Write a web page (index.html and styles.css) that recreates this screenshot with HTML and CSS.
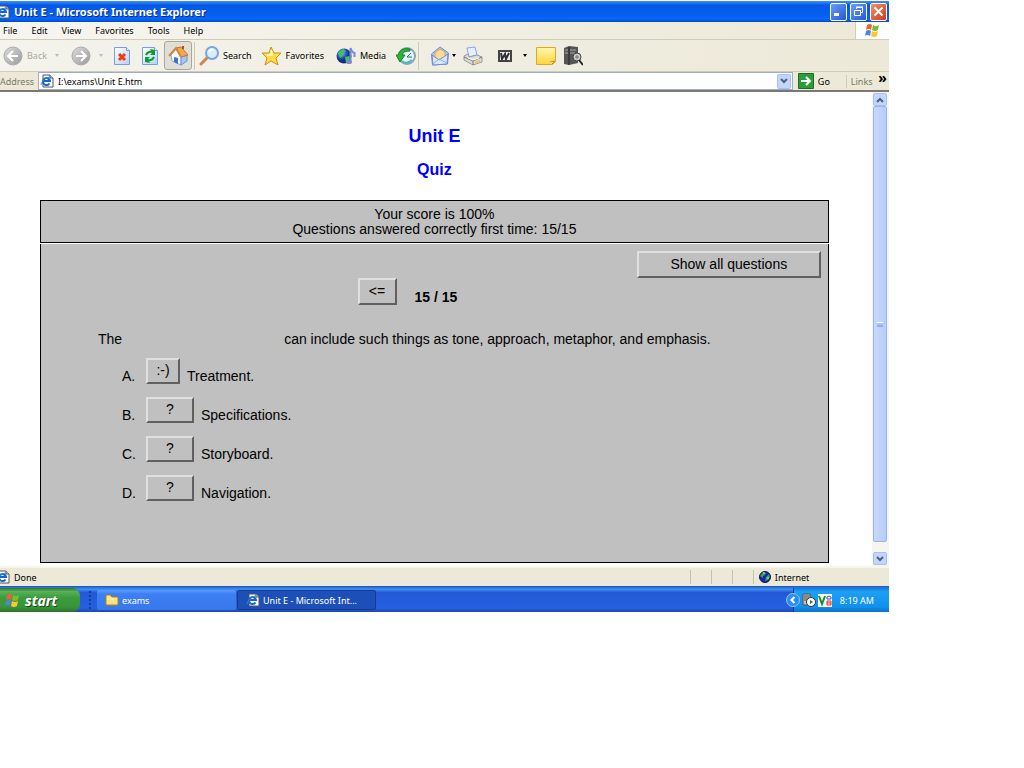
FILE: index.html
```html
<!DOCTYPE html>
<html lang="en">
<head>
    <meta charset="UTF-8">
    <meta name="viewport" content="width=device-width, initial-scale=1.0">
    <title>Unit E - Quiz</title>
    <link rel="stylesheet" href="styles.css">
</head>
<body>
    <!-- Shared icons -->
    <svg class="defs" width="0" height="0" aria-hidden="true">
        <defs>
            <linearGradient id="gray" x1="0" y1="0" x2="1" y2="1"><stop offset="0" stop-color="#ddd"/><stop offset="1" stop-color="#999"/></linearGradient>
            <linearGradient id="paper" x1="0" y1="0" x2="1" y2="1"><stop offset="0" stop-color="#fff"/><stop offset="1" stop-color="#b4d0f8"/></linearGradient>
            <linearGradient id="note" x1="0" y1="0" x2="0" y2="1"><stop offset="0" stop-color="#fff7b0"/><stop offset="1" stop-color="#ffd43c"/></linearGradient>
            <radialGradient id="ball" cx=".35" cy=".3"><stop offset="0" stop-color="#8cc8ff"/><stop offset=".6" stop-color="#1c5cc8"/><stop offset="1" stop-color="#10307c"/></radialGradient>
            <symbol id="ie" viewBox="0 0 14 14">
                <path d="M3 1h7l3 3v9H3z" fill="#fff" stroke="#555"/>
                <path d="M10 1v3h3" fill="#ddd" stroke="#555"/>
                <path d="M9.500 9.500a3.500 3.500 0 1 1 .5-2.500H4" fill="none" stroke="#1464d2" stroke-width="2"/>
                <path d="M1 11c0-3 5-8 9-8" fill="none" stroke="#2f86e8"/>
            </symbol>
            <symbol id="flag" viewBox="0 0 16 15">
                <path d="M3 2q3-2 5 0l-1 5q-2-2-5 0z" fill="#f0602c"/>
                <path d="M9 2q3 2 6 0l-1 5q-3 2-6 0z" fill="#7cba3c"/>
                <path d="M2 8q3-2 5 0l-1 5q-3-2-5 0z" fill="#4a86e0"/>
                <path d="M8 8q3 2 6 0l-1 5q-3 2-6 0z" fill="#fcc82c"/>
            </symbol>
            <symbol id="globe" viewBox="0 0 12 12">
                <circle cx="6" cy="6" r="5.500" fill="#1424b4" stroke="#101050"/>
                <path d="M1 5l3-4 3 1-1 2-2 1v2zM7 6l3-3 1 3-2 3-3 1z" fill="#34a83c"/>
                <path d="M4 2h2M8 7h2" stroke="#b8f0c0"/>
            </symbol>
        </defs>
    </svg>

    <div class="screen">
        <header class="titlebar">
            <svg class="title-icon" viewBox="4 0 10 14"><use href="#ie" width="14" height="14"/></svg>
            <span class="title-text">Unit E - Microsoft Internet Explorer</span>
            <div class="window-buttons">
                <button class="win-btn" aria-label="Minimize"><svg viewBox="0 0 15 15"><path d="M3 10.500h5" stroke="#fff" stroke-width="3"/></svg></button>
                <button class="win-btn" aria-label="Restore"><svg viewBox="0 0 15 15"><path d="M5.500 5V3.500h6v5H10M5 3h7M3.500 6.500h6v5h-6zM3 6.500h7" fill="none" stroke="#fff"/></svg></button>
                <button class="win-btn close" aria-label="Close"><svg viewBox="0 0 15 15"><path d="M3.500 3.500l8 8M11.500 3.500l-8 8" stroke="#fff" stroke-width="2"/></svg></button>
            </div>
        </header>

        <nav class="menubar">
            <ul class="menu">
                <li>File</li>
                <li>Edit</li>
                <li>View</li>
                <li>Favorites</li>
                <li>Tools</li>
                <li>Help</li>
            </ul>
            <div class="brand"><svg width="16" height="15"><use href="#flag"/></svg></div>
        </nav>

        <div class="toolbar">
            <button class="tool back" disabled>
                <svg class="icon" viewBox="0 0 20 20"><circle cx="10" cy="10" r="9" fill="url(#gray)" stroke="#aaa"/><path d="M15 10H6M10 5l-5 5 5 5" fill="none" stroke="#fff" stroke-width="2"/></svg>
                Back
            </button>
            <span class="arrow off"></span>
            <button class="tool forward" aria-label="Forward" disabled>
                <svg class="icon" viewBox="0 0 20 20"><circle cx="10" cy="10" r="9" fill="url(#gray)" stroke="#aaa"/><path d="M5 10h9M10 5l5 5-5 5" fill="none" stroke="#fff" stroke-width="2"/></svg>
            </button>
            <span class="arrow off"></span>
            <button class="tool stop" aria-label="Stop">
                <svg class="icon" viewBox="0 0 20 20"><path d="M2.500 1.500h12l3 3v14h-15z" fill="url(#paper)" stroke="#7c9cdc"/><path d="M14.500 1.500v3h3" fill="#fff" stroke="#7c9cdc"/><path d="M7 8l6 6M13 8l-6 6" stroke="#f03c14" stroke-width="3"/></svg>
            </button>
            <button class="tool refresh" aria-label="Refresh">
                <svg class="icon" viewBox="0 0 20 20"><path d="M2.500 1.500h12l3 3v14h-15z" fill="url(#paper)" stroke="#7c9cdc"/><path d="M14.500 1.500v3h3" fill="#fff" stroke="#7c9cdc"/><path d="M6 9q2-4 6-3M14 11q-2 4-6 3" fill="none" stroke="#109c28" stroke-width="2"/><path d="M10 3l5 1v5h-5l2-2zM10 17l-5-1v-5h5l-2 2z" fill="#109c28"/></svg>
            </button>
            <button class="tool home" aria-label="Home">
                <svg class="icon" viewBox="0 0 20 20"><path d="M3 9l5-6 5 8v8l-9-4z" fill="#fff" stroke="#8ca4d8"/><path d="M13 11l6-2v6l-6 4z" fill="#a8c8f4" stroke="#6c8cd0"/><path d="M8 2l5-1 7 8-7 2z" fill="#f4a84c" stroke="#c07830"/><path d="M1 10l7-8 5 9" fill="none" stroke="#d08840" stroke-width="2"/><path d="M6 11l4 1v6l-4-2z" fill="#3c74c8"/><path d="M14 0h2v3h-2z" fill="#b44c2c"/></svg>
            </button>
            <span class="divider"></span>
            <button class="tool search">
                <svg class="icon" viewBox="0 0 20 20"><path d="M2 18l7-7" stroke="#d4824c" stroke-width="3" stroke-linecap="round"/><circle cx="13" cy="7" r="6" fill="#dceefe" stroke="#7ca4dc" stroke-width="2"/><path d="M10 6q1-3 4-2" fill="none" stroke="#fff" stroke-width="2"/></svg>
                Search
            </button>
            <button class="tool favorites">
                <svg class="icon" viewBox="0 0 20 20"><path d="M9 1l3 6 7 0-5 5 2 7-7-4-6 4 2-7-5-5 7 0z" fill="#ffdc48" stroke="#c89010" stroke-linejoin="round"/><path d="M9 4l1 5-5 0" fill="none" stroke="#fff8b8" stroke-width="2"/></svg>
                Favorites
            </button>
            <button class="tool media">
                <svg class="icon" viewBox="0 0 20 20"><circle cx="8" cy="10" r="7.500" fill="url(#ball)"/><path d="M2 7l5-4 3 2-3 2-1 4-2 1zM9 11l4-1 1 3-4 4z" fill="#4cc048"/><path d="M14.500 16V2q1 4 4 5v4" fill="none" stroke="#7c88d8" stroke-width="2"/><ellipse cx="13" cy="16" rx="3" ry="2" fill="#7c88d8"/></svg>
                Media
            </button>
            <button class="tool history" aria-label="History">
                <svg class="icon" viewBox="0 0 20 20"><circle cx="11" cy="10" r="8" fill="#e8f4fc" stroke="#8ca4b8" stroke-width="2"/><path d="M14 3Q4 1 2 9H0l4 7 5-7H6q1-4 8-4z" fill="#2cb43c" stroke="#148424"/><path d="M11 11l4-4M11 11h5" fill="none" stroke="#246c7c"/><path d="M6 15q5 4 10-1" fill="none" stroke="#4cb8c0" stroke-width="2"/></svg>
            </button>
            <span class="divider"></span>
            <button class="tool mail" aria-label="Mail">
                <svg class="icon" viewBox="0 0 20 20"><path d="M1.500 8L10 1l8.500 6-1 11-15 1z" fill="#a8c8f8" stroke="#6c8cd4"/><path d="M5 7l5-4 5 3v5l-6 3-4-3z" fill="#ffdc90" stroke="#e0a848"/><path d="M2 9l7 5 9-6-1 10-14 1z" fill="#d8e8fe" stroke="#6c8cd4"/><path d="M3 18l6-5 8 4" fill="none" stroke="#8cacec"/></svg>
            </button>
            <span class="arrow"></span>
            <button class="tool print" aria-label="Print">
                <svg class="icon" viewBox="0 0 20 20"><path d="M4 2l8-1 2 8-8 2z" fill="#e4f0ff" stroke="#88a8e0"/><path d="M1 10l4-2 1 3 8-2 5 2v5l-9 3-9-5z" fill="#ddd" stroke="#999"/><path d="M1 11l9 4 9-4M10 15v4" fill="none" stroke="#777"/><path d="M5 12l5 2 6-2" stroke="#fff" fill="none"/><path d="M12 17l5-2" stroke="#e8c860" stroke-width="2"/></svg>
            </button>
            <button class="tool word" aria-label="Edit with Word">
                <svg class="icon" viewBox="0 0 20 20"><path d="M3 4h14v12H3z" fill="#444"/><path d="M5 6h10v8H5z" fill="#eee"/><path d="M6 7l1 6 3-5 1 5 3-6" fill="none" stroke="#333" stroke-width="2"/></svg>
            </button>
            <span class="arrow"></span>
            <button class="tool discuss" aria-label="Discuss">
                <svg class="icon" viewBox="0 0 20 20"><path d="M.5 1.500h19v14l-3 3H.5z" fill="url(#note)" stroke="#e0a820"/><path d="M14 16l5-1-3 3" fill="#fff0a0" stroke="#d09010"/></svg>
            </button>
            <button class="tool research" aria-label="Research">
                <svg class="icon" viewBox="0 0 20 20"><path d="M1 2l5-2 9 1v16l-9 2-5-1z" fill="#555"/><path d="M2 4h3M7 4h6M2 7h3M7 7h5" stroke="#aaa"/><path d="M6 1v18" stroke="#222"/><circle cx="14" cy="11" r="4" fill="#ccc" stroke="#444"/><path d="M16 14l4 5" stroke="#222" stroke-width="2"/><path d="M12 11h4M14 9v4" stroke="#777"/></svg>
            </button>
        </div>

        <div class="addressbar">
            <label for="address">Address</label>
            <div class="address-field">
                <svg width="14" height="14"><use href="#ie"/></svg>
                <input type="text" id="address" value="I:\exams\Unit E.htm">
                <button class="scroll-btn drop" aria-label="Show addresses"><svg viewBox="0 0 12 12"><path d="M3 4l3 3 3-3" fill="none" stroke="#4d6185" stroke-width="2"/></svg></button>
            </div>
            <button class="go"><svg viewBox="0 0 16 16"><path d="M.5.5h15v15H.5z" fill="#2c9c38" stroke="#1c6c28"/><path d="M3 8h9M8 4l4 4-4 4" fill="none" stroke="#fff" stroke-width="2"/></svg>Go</button>
            <div class="links">Links <b>»</b></div>
        </div>

        <div class="viewport">
            <main class="page">
                <h1>Unit E</h1>
                <h2>Quiz</h2>
                <div class="score">
                    Your score is 100%<br>
                    Questions answered correctly first time: 15/15
                </div>
                <div class="quiz">
                    <div class="show-all"><button class="btn">Show all questions</button></div>
                    <div class="question-nav">
                        <button class="btn">&lt;=</button>
                        <strong>15 / 15</strong>
                    </div>
                    <p class="question"><span>The</span><span class="blank"></span><span>can include such things as tone, approach, metaphor, and emphasis.</span></p>
                    <ul class="answers">
                        <li><span class="letter">A.</span><button class="btn chosen">:-)</button><span>Treatment.</span></li>
                        <li><span class="letter">B.</span><button class="btn">?</button><span>Specifications.</span></li>
                        <li><span class="letter">C.</span><button class="btn">?</button><span>Storyboard.</span></li>
                        <li><span class="letter">D.</span><button class="btn">?</button><span>Navigation.</span></li>
                    </ul>
                </div>
            </main>
            <div class="scrollbar">
                <button class="scroll-btn" aria-label="Scroll up"><svg viewBox="0 0 12 12"><path d="M3 8l3-3 3 3" fill="none" stroke="#4d6185" stroke-width="2"/></svg></button>
                <div class="thumb"><span class="grip"></span></div>
                <button class="scroll-btn" aria-label="Scroll down"><svg viewBox="0 0 12 12"><path d="M3 4l3 3 3-3" fill="none" stroke="#4d6185" stroke-width="2"/></svg></button>
            </div>
        </div>

        <div class="statusbar">
            <div class="status-text"><svg class="title-icon" viewBox="4 0 10 14"><use href="#ie" width="14" height="14"/></svg>Done</div>
            <span class="cell"></span>
            <span class="cell"></span>
            <span class="cell"></span>
            <div class="zone"><svg width="12" height="12"><use href="#globe"/></svg>Internet</div>
        </div>

        <footer class="taskbar">
            <button class="start"><svg width="16" height="15"><use href="#flag"/></svg>start</button>
            <span class="handle"></span>
            <button class="task"><svg width="14" height="14" viewBox="0 0 14 14"><path d="M1 3q0-1 1-1h3l2 2h5q1 0 1 1v6q0 1-1 1H2q-1 0-1-1z" fill="#ffe27a" stroke="#b8860c"/><path d="M2 6h10" stroke="#fff6c0"/></svg>exams</button>
            <button class="task active"><svg width="14" height="14"><use href="#ie"/></svg>Unit E - Microsoft Int...</button>
            <div class="tray">
                <button class="tray-toggle" aria-label="Show hidden icons"><svg viewBox="0 0 14 14"><circle cx="7" cy="7" r="6.500" fill="#2c8cf0" stroke="#8cc8ff"/><path d="M8.500 4L5.500 7l3 3" fill="none" stroke="#fff" stroke-width="2"/></svg></button>
                <svg width="14" height="14" viewBox="0 0 14 14"><path d="M1 1h7v11H1z" fill="#c4c0b0" stroke="#555"/><path d="M2 3h5M2 5h5M2 7h3" stroke="#555"/><circle cx="9" cy="9" r="4.500" fill="#fff" stroke="#333"/><path d="M8 7l3 2-3 2z" fill="#18801c"/></svg>
                <svg width="14" height="13" viewBox="0 0 14 13"><path d="M0 0h14v13H0z" fill="#fff"/><path d="M1 2l3 8 3-8" fill="none" stroke="#0c9420" stroke-width="2"/><path d="M9 5V3q2-2 4 0v2H9" fill="none" stroke="#2454d8"/><path d="M9 7h4v4H9zM9 9h4" fill="none" stroke="#e02828"/></svg>
                <span class="clock">8:19 AM</span>
            </div>
        </footer>
    </div>
</body>
</html>
```
FILE: styles.css
```css
:root {
    --chrome: #ece9d8;
    --line: #d0ccb8;
    --panel: #c0c0c0;
    --thumb: #c4d5fb;
    --ui: "Noto Sans", "Open Sans", sans-serif;
    --text: "Liberation Sans", Arial, sans-serif;
}

* {
    box-sizing: border-box;
}

body {
    margin: 0;
    background: #fff;
    font-family: var(--ui);
    font-size: 9px;
    color: #000;
}

button {
    font: inherit;
    color: inherit;
    padding: 0;
    border: none;
    background: none;
}

svg {
    display: block;
    flex: none;
}

.defs {
    position: absolute;
}

.screen {
    width: 86.8%;
    padding-top: 1px;
}

/* Title bar */
.titlebar {
    display: flex;
    align-items: center;
    height: 21px;
    padding-right: 2px;
    background: linear-gradient(#3c90ff, #0458e4 20%, #0560f0 70%, #0668fc 85%, #0448c8);
    color: #fff;
}

.title-icon {
    width: 10px;
    height: 14px;
}

.title-text {
    margin-left: 4px;
    font-size: 11px;
    font-weight: bold;
    text-shadow: 1px 1px #0a2a80;
}

.window-buttons {
    display: flex;
    gap: 3px;
    margin-left: auto;
}

.win-btn {
    width: 17px;
    height: 18px;
    border: 1px solid #fff;
    border-radius: 2px;
    background: linear-gradient(135deg, #6c9cf8, #2458d8);
}

.win-btn.close {
    background: linear-gradient(135deg, #f09070, #d03c14);
}

/* Menu */
.menubar {
    display: flex;
    height: 18px;
    background: linear-gradient(90deg, #f6f5f0, var(--chrome));
    border-bottom: 1px solid var(--line);
}

.menu {
    display: flex;
    align-items: center;
    gap: 14px;
    margin: 0;
    padding: 0 0 0 3px;
    list-style: none;
}

.brand {
    display: flex;
    align-items: center;
    justify-content: center;
    width: 34px;
    margin-left: auto;
    background: #fff;
    border-left: 1px solid var(--line);
}

/* Toolbar */
.toolbar {
    display: flex;
    align-items: center;
    height: 32px;
    padding-left: 3px;
    background: linear-gradient(90deg, #f4f3ec, var(--chrome));
    border-bottom: 1px solid var(--line);
}

.tool {
    display: flex;
    align-items: center;
    gap: 4px;
}

.tool:disabled {
    color: #aca899;
}

.icon {
    width: 20px;
    height: 20px;
}

.arrow {
    margin-left: 2px;
    border: 2px solid transparent;
    border-top: 3px solid #000;
    border-bottom: none;
}

.arrow.off {
    margin: 0 9px 0 8px;
    border-top-color: #bbb;
}

.arrow.off ~ .arrow.off {
    margin-right: 8px;
}

.forward {
    margin-left: 3px;
}

.stop {
    margin-left: 1px;
}

.refresh {
    margin-left: 8px;
}

.home {
    justify-content: center;
    width: 28px;
    height: 29px;
    margin-left: 4px;
    border: 1px solid #aaa79a;
    border-radius: 3px;
    background: #e0dfd6;
}

.divider {
    height: 28px;
    margin: 0 4px 0 2px;
    border-left: 1px solid #cdc9b4;
}

.favorites,
.history {
    margin-left: 10px;
}

.media,
.word {
    margin-left: 12px;
}

.mail,
.print,
.research {
    margin-left: 7px;
}

.word + .arrow {
    margin: 0 2px 0 8px;
}

.discuss {
    margin-left: 7px;
}

/* Address bar */
.addressbar {
    display: flex;
    align-items: center;
    height: 20px;
    background: var(--chrome);
    border-bottom: 2px solid #7c7870;
}

.addressbar label {
    width: 38px;
    color: #7a7768;
}

.address-field {
    display: flex;
    flex: 1;
    align-items: center;
    height: 18px;
    padding: 0 1px;
    background: #fff;
    border: 1px solid #9aafd0;
}

.address-field input {
    flex: 1;
    min-width: 0;
    padding: 0 4px;
    border: none;
    outline: none;
    font: inherit;
}

.go {
    display: flex;
    align-items: center;
    gap: 4px;
    width: 48px;
    margin-left: 5px;
}

.go svg {
    width: 16px;
    height: 16px;
}

.links {
    display: flex;
    justify-content: space-between;
    width: 43px;
    padding: 0 2px 0 4px;
    border-left: 1px solid var(--line);
    color: #7a7768;
}

.links b {
    color: #000;
    font-size: 14px;
    line-height: 6px;
}

/* Browser viewport */
.viewport {
    display: flex;
    background: #fff;
}

.page {
    flex: 1;
    padding: 34px 43px 3px 40px;
    font-family: var(--text);
    font-size: 14px;
    line-height: 15px;
}

h1,
h2 {
    margin: 0 0 14px;
    color: #0000ff;
    font-size: 18px;
    line-height: 20px;
    text-align: center;
}

h2 {
    margin-bottom: 20px;
    font-size: 16px;
}

.score {
    padding: 6px 4px 5px;
    background: var(--panel);
    border: 1px solid #000;
    text-align: center;
}

.quiz {
    min-height: 319px;
    margin-top: 1px;
    padding: 7px 7px 24px;
    background: var(--panel);
    border: 1px solid #000;
    border-top: none;
}

.btn {
    height: 26px;
    border: 2px solid;
    border-color: #e0e0e0 #606060 #606060 #e0e0e0;
    background: var(--panel);
}

.show-all {
    display: flex;
    justify-content: flex-end;
}

.show-all .btn {
    width: 184px;
    height: 27px;
}

.question-nav {
    display: flex;
    justify-content: center;
    align-items: flex-end;
    gap: 18px;
    padding-right: 54px;
}

.question-nav .btn {
    width: 39px;
    height: 27px;
}

.question {
    display: flex;
    margin: 27px 0 11px 50px;
}

.blank {
    width: 162px;
}

.answers {
    display: flex;
    flex-direction: column;
    gap: 13px;
    margin: 0;
    padding: 0 0 0 74px;
    list-style: none;
}

/* Answer text sits a little below the middle of its button */
.answers li {
    display: flex;
    align-items: flex-end;
}

.answers li > span {
    padding-left: 7px;
}

.answers .letter {
    width: 24px;
    padding-left: 0;
}

.answers .btn {
    width: 48px;
    padding-bottom: 2px;
}

.answers .chosen {
    width: 34px;
}

/* Scrollbar */
.scrollbar {
    display: flex;
    flex-direction: column;
    width: 17px;
    padding: 1px;
    background: #f6f5f2;
}

.scroll-btn {
    width: 14px;
    height: 13px;
    border: 1px solid #a8c0f0;
    border-radius: 2px;
    background: var(--thumb);
}

.scroll-btn.drop {
    height: 15px;
}

.scroll-btn svg {
    margin: 0 auto;
    width: 12px;
    height: 12px;
}

.thumb {
    display: flex;
    flex: 1;
    align-items: center;
    justify-content: center;
    width: 14px;
    margin-bottom: 10px;
    border: 1px solid #98b4ee;
    border-radius: 2px;
    background: linear-gradient(90deg, #c8d8fc, #b8ccf8);
}

.grip {
    width: 6px;
    height: 5px;
    border-top: 1px solid #fff;
    border-bottom: 2px solid #8cb0f8;
    background: #a8c4f8;
}

/* Status bar */
.statusbar {
    display: flex;
    align-items: center;
    height: 20px;
    background: var(--chrome);
    border-top: 2px solid #f6f5ee;
}

.status-text {
    display: flex;
    flex: 1;
    align-items: center;
    gap: 4px;
}

.cell,
.zone {
    width: 21px;
    height: 14px;
    border-left: 1px solid #c4c0ac;
}

.zone {
    display: flex;
    align-items: center;
    gap: 4px;
    width: 136px;
    padding-left: 5px;
}

/* Taskbar */
.taskbar {
    display: flex;
    align-items: stretch;
    height: 26px;
    background: linear-gradient(#1c50b8, #4090f4 12%, #2458d4 25%, #2460e0 85%, #1c48b0);
    color: #fff;
}

.start {
    display: flex;
    align-items: center;
    gap: 5px;
    width: 80px;
    margin-top: 2px;
    padding-left: 4px;
    border-radius: 0 8px 8px 0;
    background: linear-gradient(#2c7c2c, #58b058 15%, #3c9c3c 40%, #389438 80%, #2c742c);
    font-size: 14px;
    font-style: italic;
    font-weight: bold;
    text-shadow: 1px 1px #1c4c1c;
}

.handle {
    margin: 5px 6px 3px 9px;
    border-left: 2px dotted #143c9c;
}

.task {
    display: flex;
    align-items: center;
    gap: 3px;
    width: 139px;
    margin: 4px 1px 2px 0;
    padding-left: 8px;
    border-radius: 2px;
    background: linear-gradient(#5c9cff, #3c80f4 20%, #3878ec);
}

.task.active {
    background: #1c50b8;
    border: 1px solid #143c90;
}

.tray {
    display: flex;
    align-items: center;
    gap: 2px;
    width: 96px;
    margin: 2px 0 0 auto;
    background: linear-gradient(#1478d8, #1ca0f4 15%, #1090ec 80%, #0c70c8);
    border-left: 1px solid #0c3c94;
}

.tray-toggle {
    width: 14px;
    height: 14px;
    margin-left: -8px;
}

.clock {
    margin-left: 6px;
}
```
